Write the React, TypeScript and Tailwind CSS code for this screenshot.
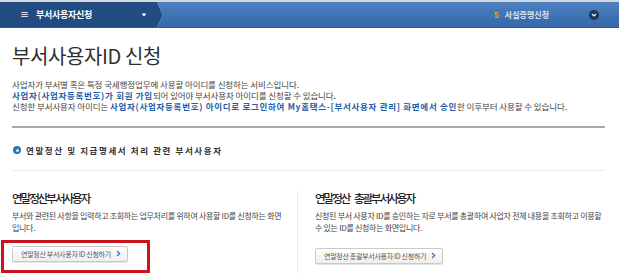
import React from "react";

const font = { fontFamily: '"Noto Sans CJK KR", "Noto Sans", sans-serif' };

function Btn({ label }: { label: string }) {
  return (
    <div className="flex h-[16px] items-center gap-[5px] rounded-[2px] border border-[#c9c9c9] bg-gradient-to-b from-white to-[#efefef] pl-[8px] pr-[6px] text-[7px] leading-[10px] tracking-[-0.3px] text-[#555] shadow-[0_1px_0_#e5e5e5]">
      <span>{label}</span>
      <svg width="5" height="7" viewBox="0 0 5 7">
        <path d="M1 1 L3.6 3.5 L1 6" fill="none" stroke="#3b7bc4" strokeWidth="1.4" />
      </svg>
    </div>
  );
}

export default function App() {
  return (
    <div className="h-[276px] w-[619px] overflow-hidden bg-white text-[#333]" style={font}>
      {/* header */}
      <div className="border-t-[2px] border-[#d4d8dd]">
        <div className="flex h-[26px] items-stretch border-b border-[#2c5a94] bg-gradient-to-b from-[#4b80c1] to-[#3768a9]">
          <div className="relative flex w-[157px] items-center bg-[#214b81] pl-[20px]">
            <span className="text-[9px] font-bold text-white">≡</span>
            <span className="ml-[7px] text-[9px] font-bold tracking-[-0.3px] text-white">부서사용자신청</span>
            <svg className="ml-auto mr-[10px]" width="6" height="4" viewBox="0 0 6 4">
              <path d="M0.5 0.5 L5.5 0.5 L3 3.5 Z" fill="#ffffff" />
            </svg>
            <svg className="absolute left-[157px] top-0" width="7" height="26" viewBox="0 0 7 26">
              <path d="M0 0 L6 13 L0 26 Z" fill="#214b81" />
              <path d="M0 0 L6 13 L0 26" fill="none" stroke="#5d8fcc" strokeWidth="0.8" />
            </svg>
          </div>
          <div className="ml-auto flex items-center pr-[20px]">
            <span className="text-[8px] font-bold text-[#f2a51c]">5</span>
            <span className="ml-[6px] text-[8px] font-bold tracking-[0px] text-[#dfe8f3]">사실증명신청</span>
            <span className="ml-[40px] flex h-[10px] w-[10px] items-center justify-center rounded-full bg-[#1d3556]">
              <svg width="6" height="4" viewBox="0 0 6 4">
                <path d="M1 1 L3 3 L5 1" fill="none" stroke="#fff" strokeWidth="1.2" />
              </svg>
            </span>
          </div>
        </div>
      </div>

      <div className="px-[12px]">
        <h1 className="mt-[16px] text-[20px] font-normal leading-[24px] tracking-[-0.4px] text-[#2f2f2f]">부서사용자ID 신청</h1>
        <div className="mt-[11px] text-[8.5px] leading-[11px] tracking-[-0.1px] text-[#444]">
          <p>사업자가 부서별 혹은 특정 국세행정업무에 사용할 아이디를 신청하는 서비스입니다.</p>
          <p>
            <span className="font-bold tracking-[0.7px] text-[#1f5ea8]">사업자(사업자등록번호)가 회원 가입</span>되어 있어야 부서사용자 아이디를 신청할 수 있습니다.
          </p>
          <p>
            신청한 부서사용자 아이디는{" "}
            <span className="font-bold tracking-[0.7px] text-[#1f5ea8]">사업자(사업자등록번호) 아이디로 로그인하여 My홈택스-[부서사용자 관리] 화면에서 승인</span>한 이후부터 사용할 수 있습니다.
          </p>
        </div>
        <div className="mt-[14px] h-[2px] w-[593px] bg-[#a9a9a9]" />

        <div className="mt-[16px] flex items-center gap-[5px] pl-[1px]">
          <span className="flex h-[8px] w-[8px] items-center justify-center rounded-full bg-[#2b73c2]">
            <span className="h-[3px] w-[3px] rounded-full bg-[#d9e8f7]" />
          </span>
          <span className="text-[8.5px] font-bold tracking-[1.6px] text-[#333]">연말정산 및 지급명세서 처리 관련 부서사용자</span>
        </div>
        <div className="mt-[13px] h-px w-[593px] bg-[#ececec]" />

        <div className="mt-[20px] flex">
          <div className="w-[288px]">
            <h2 className="text-[11.5px] font-medium leading-[14px] tracking-[-2px] text-[#222]">연말정산부서사용자</h2>
            <p className="mt-[5px] w-[275px] text-[8px] leading-[12px] tracking-[-0.3px] text-[#444]">
              부서와 관련된 사항을 입력하고 조회하는 업무처리를 위하여 사용할 ID를 신청하는 화면입니다.
            </p>
            <div className="-ml-[11px] mt-[6px] flex w-[149px] border-[3px] border-[#c8141a] pb-[8px] pl-[8px] pt-[3px]">
              <Btn label="연말정산 부서사용자 ID 신청하기" />
            </div>
          </div>
          <div className="w-px self-stretch bg-[#ececec]" />
          <div className="pl-[17px]">
            <h2 className="text-[11.5px] font-medium leading-[14px] tracking-[-2px] text-[#222] [word-spacing:4px]">연말정산 총괄부서사용자</h2>
            <p className="mt-[5px] w-[292px] text-[8px] leading-[12px] tracking-[-0.3px] text-[#444]">
              신청된 부서 사용자 ID를 승인하는 자로 부서를 총괄하여 사업자 전체 내용을 조회하고 이용할 수 있는 ID를 신청하는 화면입니다.
            </p>
            <div className="mt-[14px] flex">
              <Btn label="연말정산 총괄부서사용자 ID 신청하기" />
            </div>
          </div>
        </div>
      </div>
    </div>
  );
}
